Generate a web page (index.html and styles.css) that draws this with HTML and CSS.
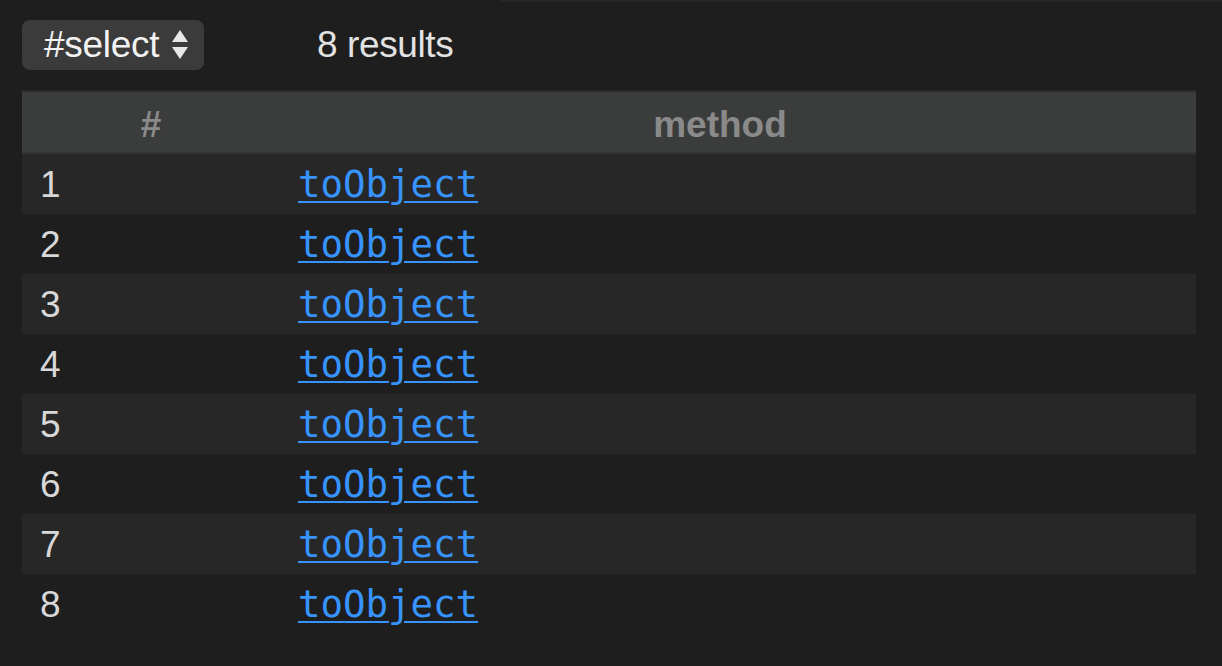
FILE: index.html
```html
<!DOCTYPE html>
<html>
<head>
<meta charset="utf-8">
<link rel="stylesheet" href="styles.css">
</head>
<body>
<div class="topline"></div>
<div class="toolbar">
  <div class="select">
    <span class="select-label">#select</span>
    <svg class="arrows" width="18" height="32" viewBox="0 0 18 32"><path d="M9 1 L17 13 L1 13 Z" fill="#e8e8e8"/><path d="M1 18 L17 18 L9 30 Z" fill="#e8e8e8"/></svg>
  </div>
  <div class="count">8 results</div>
</div>
<div class="table">
  <div class="row head">
    <div class="cell num">#</div>
    <div class="cell method">method</div>
  </div>
  <div class="row odd"><div class="cell idx">1</div><div class="cell val"><a href="#">toObject</a></div></div>
  <div class="row"><div class="cell idx">2</div><div class="cell val"><a href="#">toObject</a></div></div>
  <div class="row odd"><div class="cell idx">3</div><div class="cell val"><a href="#">toObject</a></div></div>
  <div class="row"><div class="cell idx">4</div><div class="cell val"><a href="#">toObject</a></div></div>
  <div class="row odd"><div class="cell idx">5</div><div class="cell val"><a href="#">toObject</a></div></div>
  <div class="row"><div class="cell idx">6</div><div class="cell val"><a href="#">toObject</a></div></div>
  <div class="row odd"><div class="cell idx">7</div><div class="cell val"><a href="#">toObject</a></div></div>
  <div class="row"><div class="cell idx">8</div><div class="cell val"><a href="#">toObject</a></div></div>
</div>
</body>
</html>
```
FILE: styles.css
```css
html, body {
  margin: 0;
  padding: 0;
  background: #1e1e1e;
  font-family: "Liberation Sans", Arial, sans-serif;
  color: #e0e0e0;
}
.topline {
  height: 2px;
  margin-left: 500px;
  background: #262626;
}
.toolbar {
  display: flex;
  align-items: center;
  padding: 18px 0 0 22px;
  height: 50px;
}
.select {
  display: flex;
  align-items: center;
  width: 182px;
  height: 50px;
  box-sizing: border-box;
  padding-left: 22px;
  background: #3b3b3b;
  border-radius: 8px;
}
.select-label {
  font-size: 37px;
  color: #f2f2f2;
  letter-spacing: -0.3px;
}
.arrows {
  margin-left: 12px;
}
.count {
  margin-left: 113px;
  font-size: 37px;
  color: #e2e2e2;
  letter-spacing: -0.4px;
}
.table {
  margin: 20px 26px 0 22px;
}
.row {
  display: grid;
  grid-template-columns: 258px 1fr;
  height: 60px;
  align-items: center;
}
.row.odd {
  background: #272727;
}
.row.head {
  height: 60px;
  background: #3b3d3c;
  border-top: 2px solid #2b2b2b;
  border-bottom: 2px solid #333433;
}
.cell {
  font-size: 37px;
  line-height: 60px;
}
.head .cell {
  font-weight: bold;
  color: #8a8a8a;
  text-align: center;
  line-height: 60px;
  padding-top: 3px;
}
.head .method {
  padding-right: 36px;
}
.idx {
  padding-left: 18px;
  color: #d8d8d8;
}
.val {
  padding-left: 18px;
}
.val a {
  font-family: "DejaVu Sans Mono", "Liberation Mono", monospace;
  font-size: 37.4px;
  color: #3794ff;
  text-decoration: underline;
  text-decoration-thickness: 2px;
  text-underline-offset: 4px;
}
```
